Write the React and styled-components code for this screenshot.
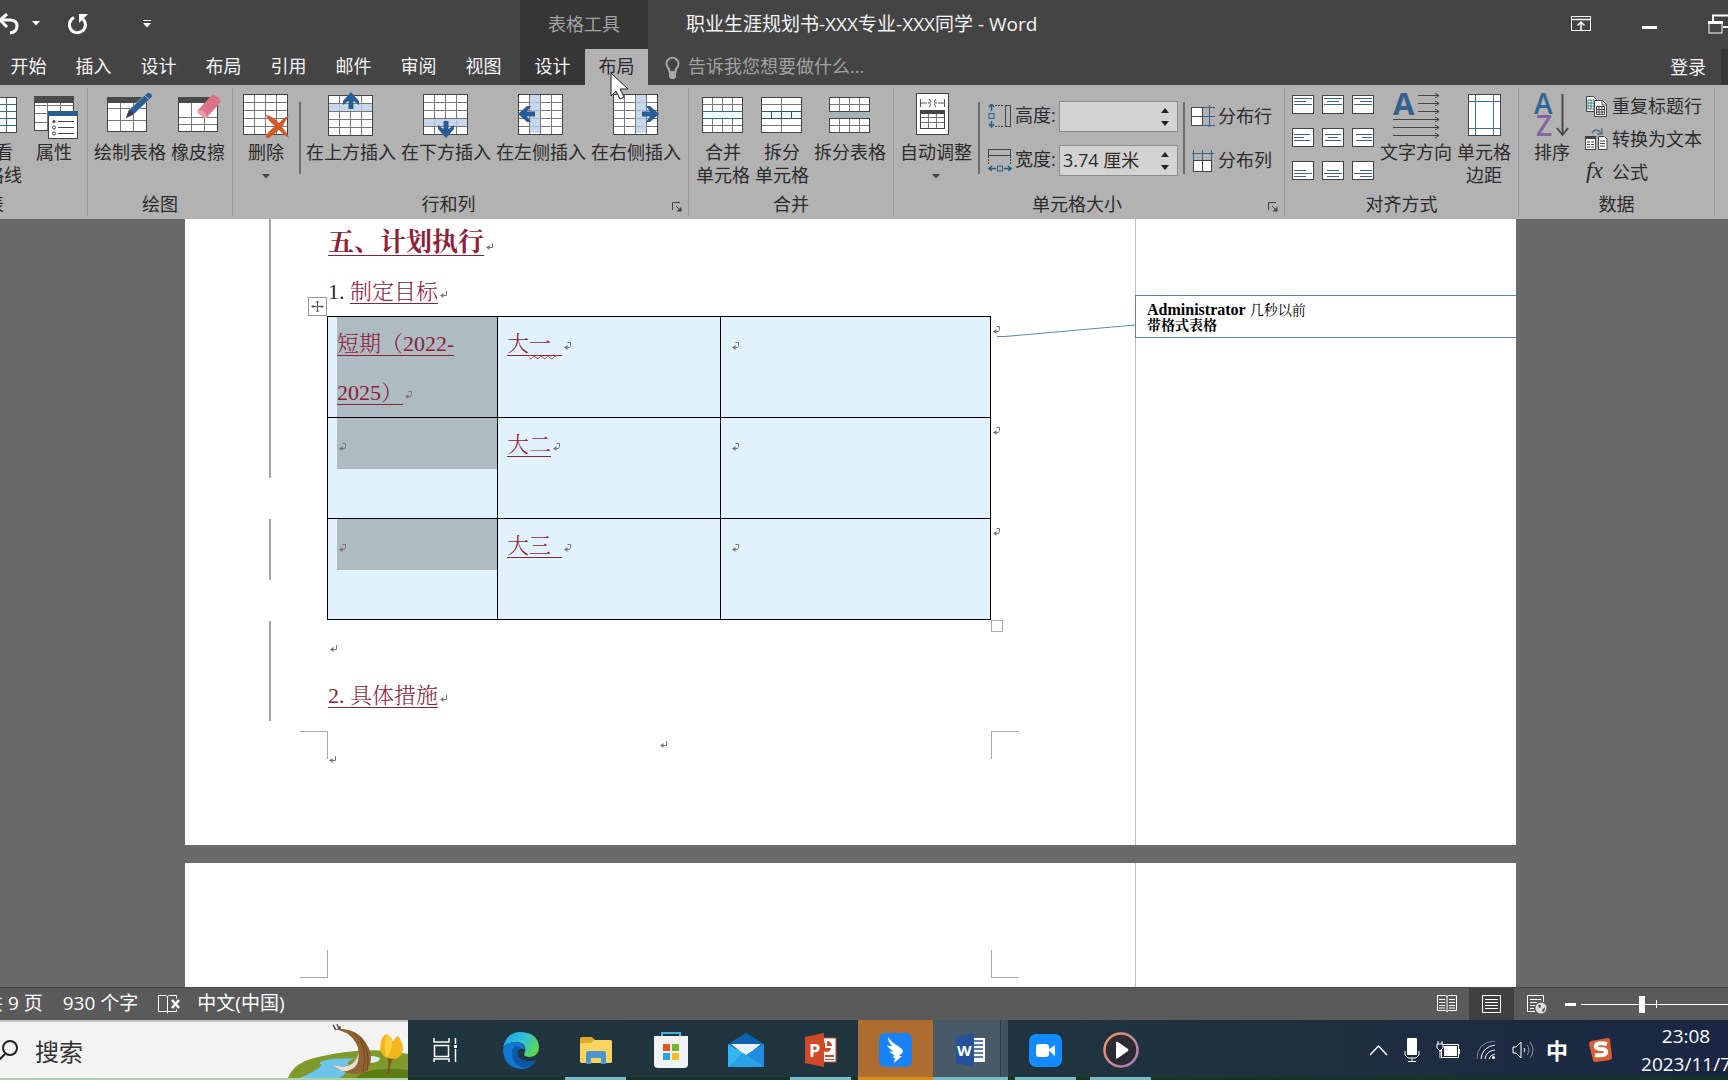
import React, { useState } from 'react';
import styled, { createGlobalStyle, css } from 'styled-components';

const UI_FONT = '"Open Sans", "Noto Sans CJK SC", sans-serif';
const DOC_FONT = '"Liberation Serif", "Noto Serif CJK SC", "Noto Sans CJK SC", serif';

/* ---------- ribbon drawings ---------- */

const steps = (from, size, n) => Array.from({ length: n - 1 }, (_, i) => Math.round(from + (size * (i + 1)) / n) + 0.5);

const Cells = ({ x, y, w, h, cols, rows, line = '#777', edge = '#444', fill = '#fff' }) => (
  <g shapeRendering="crispEdges">
    <rect x={x + 0.5} y={y + 0.5} width={w} height={h} fill={fill} />
    {steps(x, w, cols).map(v => <path key={'c' + v} d={`M${v} ${y}V${y + h}`} stroke={line} />)}
    {steps(y, h, rows).map(v => <path key={'r' + v} d={`M${x} ${v}H${x + w}`} stroke={line} />)}
    <rect x={x + 0.5} y={y + 0.5} width={w} height={h} fill="none" stroke={edge} />
  </g>
);

const Big = ({ children }) => (
  <svg width="48" height="48" viewBox="0 0 48 48" fill="none" aria-hidden="true">{children}</svg>
);

const GridlinesIcon = () => (
  <Big><Cells x={4} y={5} w={41} h={35} cols={4} rows={5} line="#2f6f78" /></Big>
);
const PropertiesIcon = () => (
  <Big>
    <Cells x={4} y={4} w={39} h={34} cols={3} rows={4} />
    <path d="M4 4h40v7H4z" fill="#4a4a4a" />
    <rect x="18.5" y="19.5" width="29" height="27" fill="#fff" stroke="#444" />
    <path d="M18 19h30v5H18z" fill="#2a5c8c" />
    <path d="M28 29.500h16M28 35.500h16M28 41.500h16" stroke="#444" />
    <circle cx="24" cy="29.500" r="1.500" fill="#444" />
    <circle cx="24" cy="35.500" r="1.500" stroke="#444" />
    <circle cx="24" cy="41.500" r="1.500" stroke="#444" />
  </Big>
);
const DrawIcon = () => (
  <Big>
    <Cells x={1} y={5} w={39} h={34} cols={3} rows={3} />
    <path d="M1 5h40v6H1z" fill="#4a4a4a" />
    <path d="M20 26l3-8L41 1q3-2 6 3L28 22z" fill="#2a5f96" stroke="#b2b2b2" strokeWidth=".8" />
    <path d="M20 26l3-8 5 4z" fill="#3b3b3b" />
    <path d="M38 3l6 5" stroke="#9dbbd8" />
  </Big>
);
const EraserIcon = () => (
  <Big>
    <Cells x={4} y={5} w={39} h={34} cols={3} rows={5} />
    <path d="M5 12h38v12H5z" fill="#fff" />
    <path d="M4 5h40v6H4z" fill="#4a4a4a" />
    <path d="M17.500 11v20M30.500 20v11" stroke="#777" />
    <path d="M24 18L37 4q2-2 5 0l4 3q1 2 0 4L33 25q-2 2-4 0l-5-4q-1-1 0-3z" fill="#dd7387" />
    <path d="M24 18l6 1 4 6q-3 2-5 0l-5-4z" fill="#ec9aaa" />
  </Big>
);
const DeleteIcon = () => (
  <Big>
    <Cells x={1} y={2} w={44} h={40} cols={4} rows={5} />
    <path d="M24 23q5 0 13 8Q42 25 47 24q-4 5-7 11 5 5 7 11-6-3-10-8-6 5-10 8-4 1-3-3 4-5 9-9-7-5-9-11z" fill="#d35a26" />
  </Big>
);
const Arrow = ({ at }) => (
  <path transform={at} d="M-8 1L0 -8L8 1V5L2.500 1V9H-2.500V1L-8 5z" fill="#265d96" />
);
const InsertIcon = ({ dir }) => {
  const band = { up: [2, 12, 43, 7], down: [2, 27, 43, 7], left: [13, 3, 10, 38], right: [24, 3, 10, 38] }[dir];
  const at = { up: 'translate(24 8)', down: 'translate(24 38) rotate(180)', left: 'translate(9 22) rotate(-90)', right: 'translate(39 22) rotate(90)' }[dir];
  return (
    <Big>
      <Cells x={1} y={dir === 'up' ? 3 : 2} w={44} h={40} cols={4} rows={5} />
      <rect x={band[0]} y={band[1]} width={band[2]} height={band[3]} fill="#b9cce6" opacity=".8" />
      <Arrow at={at} />
    </Big>
  );
};
const MergeIcon = () => (
  <Big>
    <Cells x={3} y={5} w={40} h={35} cols={4} rows={5} />
    <path d="M4 20h39v6H4z" fill="#eefcfc" />
    <path d="M3 19.500h41M3 26.500h41" stroke="#2f6f78" />
  </Big>
);
const SplitCellsIcon = () => (
  <Big>
    <Cells x={3} y={5} w={40} h={35} cols={2} rows={5} />
    <path d="M4 20h39v6H4z" fill="#eefcfc" />
    <path d="M3 19.500h41M3 26.500h41M13.500 20v6M23.500 20v6M33.500 20v6" stroke="#2b5560" />
  </Big>
);
const SplitTableIcon = () => (
  <Big>
    <path d="M3 20h41v6H3z" fill="#a5b2b7" />
    <Cells x={3} y={5} w={40} h={14} cols={4} rows={2} />
    <Cells x={3} y={26} w={40} h={14} cols={4} rows={2} />
  </Big>
);
const AutoFitIcon = () => (
  <Big>
    <rect x="4.500" y="1.500" width="32" height="41" fill="#fff" stroke="#444" />
    <path d="M8.500 7v8M32.500 7v8M9 11h6M26 11h6M17 7l2 3M24 7l-2 3M17 15l2-3M24 15l-2-3M16 11h3M22 11h3" stroke="#555" />
    <Cells x={8} y={19} w={24} h={17} cols={3} rows={3} />
    <path d="M8 18h25v4H8z" fill="#444" />
  </Big>
);
const TextDirIcon = () => (
  <Big>
    <text x="1" y="23" fontFamily="Open Sans" fontWeight="700" fontSize="31" fill="#33608f">A</text>
    <path d="M26 3.500h21M26 11.500h21M26 19.500h21M1 27.500h46M1 35.500h46M1 43.500h46" stroke="#444" />
    <path d="M43 1l4 2.500-4 2.500M43 9l4 2.500-4 2.500M43 17l4 2.500-4 2.500M43 25l4 2.500-4 2.500M43 33l4 2.500-4 2.500M43 41l4 2.500-4 2.500" stroke="#444" />
  </Big>
);
const MarginsIcon = () => (
  <Big>
    <rect x="8.500" y="2.500" width="32" height="41" fill="#fff" stroke="#444" />
    <path d="M15.500 3v40M33.500 3v40M9 9.500h31M9 36.500h31" stroke="#3f6f93" />
  </Big>
);
const SortIcon = () => (
  <Big>
    <text x="6" y="22" fontFamily="Open Sans" fontWeight="600" fontSize="28" fill="#2d6797">A</text>
    <text x="8" y="44" fontFamily="Open Sans" fontWeight="600" fontSize="28" fill="#8564a4">Z</text>
    <path d="M34.500 2v41M29 36l5.500 7 5.500-7" stroke="#4a4a4a" strokeWidth="2" />
  </Big>
);

const Small = ({ children }) => (
  <svg width="24" height="24" viewBox="0 0 24 24" fill="none" aria-hidden="true">{children}</svg>
);
const HeightIcon = () => (
  <Small>
    <path d="M3.500 0v7M1 3l2.500-3L6 3M3.500 17v6M1 20l2.500 3L6 20" stroke="#2f5d80" strokeWidth="1.500" />
    <rect x="1" y="9.500" width="5" height="5" stroke="#2f5d80" />
    <path d="M7 1.500h9M7 22.500h9" stroke="#444" strokeDasharray="2 1" />
    <rect x="17.500" y="1.500" width="5" height="21" stroke="#444" />
  </Small>
);
const WidthIcon = () => (
  <Small>
    <rect x=".5" y="1.500" width="22" height="6" stroke="#444" />
    <path d="M.5 8v9M22.500 8v9" stroke="#444" strokeDasharray="2 1" />
    <path d="M1 20.500h7M4 18l-3 2.500 3 2.500M16 20.500h7M20 18l3 2.500-3 2.500" stroke="#2f5d80" strokeWidth="1.500" />
    <rect x="9.500" y="18" width="5" height="5" stroke="#2f5d80" />
  </Small>
);
const RowsIcon = () => (
  <Small>
    <rect x=".5" y="3.500" width="11" height="18" fill="#fff" stroke="#444" />
    <path d="M0 12.500h12" stroke="#444" />
    <path d="M12 3.500h12M12 12.500h12M12 21.500h12M18.500 1v22" stroke="#3b6285" />
  </Small>
);
const ColsIcon = () => (
  <Small>
    <path d="M1 5.500h22M2.500 2v10M11.500 2v10M20.500 2v10" stroke="#3b6285" />
    <rect x="2.500" y="12.500" width="18" height="11" fill="#fff" stroke="#444" />
    <path d="M11.500 12v12" stroke="#444" />
  </Small>
);
const AlignIcon = ({ h, v }) => {
  const y = { t: 3.5, m: 6.5, b: 9.5 }[v];
  const widths = v === 'm' ? [16, 10, 16] : v === 't' ? [18, 12, 18] : [12, 18, 12];
  return (
    <svg width="22" height="19" viewBox="0 0 22 19" aria-hidden="true">
      <rect x=".5" y=".5" width="21" height="18" fill="#fff" stroke="#444" />
      {widths.map((w, i) => {
        const x = h === 'l' ? 2 : h === 'c' ? 11 - w / 2 : 20 - w;
        return <path key={i} d={`M${x} ${y + i * 3}h${w}`} stroke="#3b6285" />;
      })}
    </svg>
  );
};
const RepeatIcon = () => (
  <Small>
    <path d="M1.500 2.500h7l3 3v12h-10z" fill="#fff" stroke="#444" />
    <path d="M3 6h6v9H3zM3 9h6M3 12h6M6 6v9" stroke="#3f7f86" />
    <path d="M9.500 6.500h8l4 4v12h-12z" fill="#fff" stroke="#444" />
    <path d="M17 7v4h4M11.500 12.500h8v8h-8zM11 15.500h8M11 18h8M14 12v8M17 12v8" stroke="#444" />
  </Small>
);
const ConvertIcon = () => (
  <Small>
    <rect x=".5" y="9.500" width="10" height="13" fill="#fff" stroke="#444" />
    <path d="M0 9h11v3H0z" fill="#444" />
    <path d="M2 15h3M6 15h3M2 17.500h3M6 17.500h3M2 20h3M6 20h3" stroke="#444" />
    <path d="M13.500 9.500h6l2.500 2.500v10.500h-8.500z" fill="#fff" stroke="#444" />
    <path d="M15 14h5M15 16.500h5M15 19h5" stroke="#444" />
    <path d="M7 6q4-6 9 0M17 1v6h-5" stroke="#5a6f80" strokeWidth="1.500" />
  </Small>
);
const FxIcon = () => (
  <Small>
    <text x="1" y="18" fontFamily="Liberation Serif" fontStyle="italic" fontSize="23" fill="#2b2b2b">fx</text>
  </Small>
);
const Launcher = () => (
  <svg width="10" height="10" viewBox="0 0 10 10" fill="none" aria-hidden="true">
    <path d="M.5 8V.5H8M4 4l4 4" stroke="#444" />
    <path d="M9.500 4.500v5h-5z" fill="#444" />
  </svg>
);

/* ---------- document marks ---------- */

const Mark = ({ cell }) => (
  <svg width="8" height="9" viewBox="0 0 8 9" fill="none" aria-hidden="true">
    {cell
      ? <path d="M3.500 .5h3v3l-1 2h-3" stroke="#777" />
      : <path d="M6.500 1v4.500h-4" stroke="#777" />}
    <path d="M0 5.500L3.500 3v5z" fill="#777" />
  </svg>
);

/* ---------- page ---------- */

const App = () => {
  const [height, setHeight] = useState('');
  const [width, setWidth] = useState('3.74 厘米');
  const [zoom, setZoom] = useState(40);

  return (
    <Window>
      <Global />
      <TopBar>
        <TopLeft>
          <QuickAccess>
            <QuickButton aria-label="撤消">
              <svg width="20" height="22" viewBox="0 0 20 22" fill="none">
                <path d="M1 7h9q7 0 7 6t-7 7" stroke="#fff" strokeWidth="3" />
                <path d="M7 1L0 7l7 7" stroke="#fff" strokeWidth="3" />
              </svg>
            </QuickButton>
            <QuickButton aria-label="撤消列表" $gap={12}>
              <svg width="8" height="5"><path d="M0 0h8L4 4.500z" fill="#fff" /></svg>
            </QuickButton>
            <QuickButton aria-label="重复" $gap={28}>
              <svg width="20" height="22" viewBox="0 0 20 22" fill="none">
                <path d="M6 4.500a8 8 0 1 0 9 1.500" stroke="#fff" strokeWidth="3" />
                <path d="M11 1h9L11 10z" fill="#fff" />
              </svg>
            </QuickButton>
            <QuickButton aria-label="自定义快速访问工具栏" $gap={55}>
              <svg width="8" height="8"><path d="M0 0h8v1H0zM0 3h8L4 7.500z" fill="#fff" /></svg>
            </QuickButton>
          </QuickAccess>
          <Tabs>
            {['开始', '插入', '设计', '布局', '引用', '邮件', '审阅', '视图'].map(t => <Tab key={t}>{t}</Tab>)}
          </Tabs>
        </TopLeft>
        <Context>
          <ContextTitle>表格工具</ContextTitle>
          <ContextTabs>
            <Tab>设计</Tab>
            <Tab $active>布局</Tab>
          </ContextTabs>
          <Pointer width="20" height="28" viewBox="0 0 20 28" aria-hidden="true">
            <path d="M1 1v23l5-5 4 8 4-2-4-8h8z" fill="#fff" stroke="#222" />
          </Pointer>
        </Context>
        <TopRight>
          <TitleRow>
            <Title>职业生涯规划书-XXX专业-XXX同学 - Word</Title>
            <WindowButtons>
              <PlainButton aria-label="功能区显示选项">
                <svg width="20" height="16" viewBox="0 0 20 16" fill="none">
                  <rect x=".5" y=".5" width="19" height="14" stroke="#fff" />
                  <path d="M0 3.500h20M10 6v8M6.500 9.500L10 6l3.500 3.500" stroke="#fff" strokeWidth="1.500" />
                </svg>
              </PlainButton>
              <PlainButton aria-label="最小化">
                <svg width="15" height="16"><path d="M0 10h15v3H0z" fill="#fff" /></svg>
              </PlainButton>
              <PlainButton aria-label="向下还原">
                <svg width="20" height="20" viewBox="0 0 20 20" fill="none">
                  <path d="M5 7V1.500h15M15 13h5" stroke="#fff" strokeWidth="2" />
                  <rect x="1" y="8" width="13" height="11" stroke="#fff" />
                  <path d="M0 7h15v3H0z" fill="#fff" />
                </svg>
              </PlainButton>
            </WindowButtons>
          </TitleRow>
          <TellRow>
            <TellLabel>
              <svg width="15" height="23" viewBox="0 0 15 23" fill="none" aria-hidden="true">
                <path d="M4.500 16q0-3-2-5a6 6 0 1 1 10 0q-2 2-2 5z" stroke="#a9a9a9" strokeWidth="2" />
                <path d="M4 17h7v4l-2 2H6l-2-2z" fill="#a9a9a9" />
              </svg>
              <TellInput placeholder="告诉我您想要做什么..." aria-label="操作说明搜索" />
            </TellLabel>
            <SignIn>登录</SignIn>
            <Share />
          </TellRow>
        </TopRight>
      </TopBar>

      <Ribbon>
        <Group $bleed>
          <GroupBody $pad="0 9px 0 0" $end>
            <BigButton><GridlinesIcon />查看<br />网格线</BigButton>
            <BigButton $indent={3}><PropertiesIcon />属性</BigButton>
          </GroupBody>
          <GroupLabel>表</GroupLabel>
        </Group>
        <Group>
          <GroupBody $pad="0 7px 0 6px">
            <BigButton><DrawIcon />绘制表格</BigButton>
            <BigButton><EraserIcon />橡皮擦</BigButton>
          </GroupBody>
          <GroupLabel>绘图</GroupLabel>
        </Group>
        <Group>
          <GroupBody $pad="0 7px 0 9px">
            <BigButton><DeleteIcon />删除<Caret /></BigButton>
            <Rule $left={4} />
            <BigButton><InsertIcon dir="up" />在上方插入</BigButton>
            <BigButton><InsertIcon dir="down" />在下方插入</BigButton>
            <BigButton><InsertIcon dir="left" />在左侧插入</BigButton>
            <BigButton><InsertIcon dir="right" />在右侧插入</BigButton>
          </GroupBody>
          <GroupLabel $launch>行和列<LaunchButton aria-label="表格属性"><Launcher /></LaunchButton></GroupLabel>
        </Group>
        <Group>
          <GroupBody $pad="0 7px 0 7px">
            <BigButton><MergeIcon />合并<br />单元格</BigButton>
            <BigButton><SplitCellsIcon />拆分<br />单元格</BigButton>
            <BigButton><SplitTableIcon />拆分表格</BigButton>
          </GroupBody>
          <GroupLabel>合并</GroupLabel>
        </Group>
        <Group>
          <GroupBody $pad="0 12px 0 6px">
            <BigButton><AutoFitIcon />自动调整<Caret /></BigButton>
            <Rule $left={1} />
            <SizeGrid>
              <SizeLabel htmlFor="cell-height"><HeightIcon />高度:</SizeLabel>
              <Spin>
                <SpinInput id="cell-height" value={height} onChange={e => setHeight(e.target.value)} />
                <Spinner />
              </Spin>
              <SizeLabel htmlFor="cell-width"><WidthIcon />宽度:</SizeLabel>
              <Spin>
                <SpinInput id="cell-width" value={width} onChange={e => setWidth(e.target.value)} />
                <Spinner />
              </Spin>
            </SizeGrid>
            <Rule />
            <Spread>
              <SmallButton><RowsIcon />分布行</SmallButton>
              <SmallButton><ColsIcon />分布列</SmallButton>
            </Spread>
          </GroupBody>
          <GroupLabel $launch>单元格大小<LaunchButton aria-label="单元格大小选项"><Launcher /></LaunchButton></GroupLabel>
        </Group>
        <Group>
          <GroupBody $pad="0 7px 0 7px">
            <AlignGrid>
              {['t', 'm', 'b'].map(v => ['l', 'c', 'r'].map(h => (
                <PlainButton key={v + h} aria-label={'对齐 ' + v + h}><AlignIcon h={h} v={v} /></PlainButton>
              )))}
            </AlignGrid>
            <BigButton><TextDirIcon />文字方向</BigButton>
            <BigButton><MarginsIcon />单元格<br />边距</BigButton>
          </GroupBody>
          <GroupLabel>对齐方式</GroupLabel>
        </Group>
        <Group>
          <GroupBody $pad="0 12px 0 9px">
            <BigButton><SortIcon />排序</BigButton>
            <DataList>
              <SmallButton><RepeatIcon />重复标题行</SmallButton>
              <SmallButton><ConvertIcon />转换为文本</SmallButton>
              <SmallButton><FxIcon />公式</SmallButton>
            </DataList>
          </GroupBody>
          <GroupLabel>数据</GroupLabel>
        </Group>
      </Ribbon>

      <Workspace>
        <Page>
          <PageMain>
            <PageRow>
              <Gutter>
                <ChangeBar $h={259} />
                <ChangeBar $h={61} />
                <ChangeBar $h={100} />
              </Gutter>
              <Text>
                <Heading><Ins>五、计划执行</Ins><Mark /></Heading>
                <Para $first>1. <Ins>制定目标</Ins><Mark /></Para>
                <TableWrap>
                  <MoveHandle>
                    <svg width="13" height="13" viewBox="0 0 13 13" fill="none" aria-hidden="true">
                      <path d="M6.500 1v11M1 6.500h11M5 2.500L6.500 1 8 2.500M5 10.500L6.500 12 8 10.500M2.500 5L1 6.500 2.500 8M10.500 5L12 6.500 10.500 8" stroke="#555" />
                    </svg>
                  </MoveHandle>
                  <DocTable>
                    <colgroup>
                      <Col $w="25.650%" /><Col $w="33.600%" /><Col />
                    </colgroup>
                    <tbody>
                      <tr>
                        <Cell><Selected><Ins>短期（2022-</Ins><br /><Ins>2025）</Ins><Mark cell /></Selected></Cell>
                        <Cell><Line><Ins>大<Wavy>一&nbsp;</Wavy>&nbsp;</Ins><Mark cell /></Line></Cell>
                        <Cell><Line><Mark cell /></Line></Cell>
                      </tr>
                      <tr>
                        <Cell><Selected><Mark cell /></Selected></Cell>
                        <Cell><Line><Ins>大二</Ins><Mark cell /></Line></Cell>
                        <Cell><Line><Mark cell /></Line></Cell>
                      </tr>
                      <tr>
                        <Cell><Selected><Mark cell /></Selected></Cell>
                        <Cell><Line><Ins>大三&nbsp;&nbsp;</Ins><Mark cell /></Line></Cell>
                        <Cell><Line><Mark cell /></Line></Cell>
                      </tr>
                    </tbody>
                  </DocTable>
                  <ResizeHandle />
                </TableWrap>
                <Para><Mark /></Para>
                <Para><Ins>2. 具体措施</Ins><Mark /></Para>
              </Text>
              <RightMargin>
                <Mark cell /><Mark cell /><Mark cell />
                <Connector viewBox="0 0 138 14" preserveAspectRatio="none" aria-hidden="true">
                  <path d="M0 12.500h8L138 1" stroke="#5a8ba8" fill="none" />
                </Connector>
              </RightMargin>
            </PageRow>
            <Corners>
              <Corner $left />
              <FooterMarks><Mark /><Mark /><span /></FooterMarks>
              <Corner />
            </Corners>
          </PageMain>
          <Markup>
            <Balloon>
              <strong>Administrator</strong> <BalloonTime>几秒以前</BalloonTime><br />
              <BalloonNote>带格式表格</BalloonNote>
            </Balloon>
          </Markup>
        </Page>
        <Page $next>
          <PageMain>
            <Corners $top>
              <Corner $left $bottom />
              <FooterMarks />
              <Corner $bottom />
            </Corners>
          </PageMain>
          <Markup />
        </Page>
      </Workspace>

      <StatusBar>
        <StatusText>共 9 页</StatusText>
        <StatusText>930 个字</StatusText>
        <StatusButton aria-label="校对">
          <svg width="22" height="20" viewBox="0 0 22 20" fill="none">
            <path d="M14 17.500H10q-1-1-2 0H.5v-16h7q1 0 2 1v15M9.500 2.500q1-1 2-1h7v3" stroke="#fff" />
            <path d="M14 6l7 8M21 6l-7 8" stroke="#fff" strokeWidth="2.500" />
            <path d="M9.500 17v2.500M18.500 15.500v2h-6" stroke="#fff" />
          </svg>
        </StatusButton>
        <StatusText>中文(中国)</StatusText>
        <Spacer />
        <ViewButton aria-label="阅读视图">
          <svg width="20" height="20" viewBox="0 0 20 20" fill="none">
            <path d="M.5 1.500h8l1.500 1 1.500-1h8v15h-8L10 18l-1.500-1.500h-8zM10 2v16M2 5.500h6M2 8.500h6M2 11.500h6M2 14h6M12 5.500h6M12 8.500h6M12 11.500h6M12 14h6" stroke="#fff" />
          </svg>
        </ViewButton>
        <ViewButton $active aria-label="页面视图">
          <svg width="20" height="20" viewBox="0 0 20 20" fill="none">
            <path d="M.5 1.500h18v17H.5zM3 5.500h13M3 8.500h13M3 11.500h13M3 14.500h13" stroke="#fff" />
          </svg>
        </ViewButton>
        <ViewButton aria-label="Web 版式视图">
          <svg width="20" height="20" viewBox="0 0 20 20" fill="none">
            <path d="M8 17.500H.5v-16h16V8M3 5.500h11M3 8.500h7M3 11.500h5M3 14.500h4" stroke="#fff" />
            <circle cx="14" cy="14" r="5.500" fill="#ddd" />
            <path d="M11 11q3-1 3 1t-2 2zM15 16l3-3q0 4-2 5z" fill="#555" />
          </svg>
        </ViewButton>
        <ZoomOut aria-label="缩小"><svg width="11" height="3"><path d="M0 0h11v3H0z" fill="#fff" /></svg></ZoomOut>
        <Zoom type="range" aria-label="显示比例" value={zoom} onChange={e => setZoom(e.target.value)} />
      </StatusBar>

      <Taskbar>
        <Search>
          <svg width="19" height="21" viewBox="0 0 19 21" fill="none" aria-hidden="true">
            <circle cx="10" cy="8" r="7" stroke="#222" strokeWidth="2" /><path d="M5 14l-6 6" stroke="#222" strokeWidth="2" />
          </svg>
          <SearchInput placeholder="搜索" aria-label="搜索" />
          <SearchArt />
        </Search>
        <AppButton aria-label="任务视图">
          <svg width="25" height="26" viewBox="0 0 25 26" fill="none">
            <path d="M1 1v4h15V1M1 25v-3h15v3M1.500 8.500h14v11h-14zM22.500 1v6M22.500 12v13" stroke="#fff" strokeWidth="1.500" />
            <path d="M21 8h3v3h-3z" fill="#fff" />
          </svg>
        </AppButton>
        <AppButton aria-label="Microsoft Edge"><EdgeLogo /></AppButton>
        <AppButton $open aria-label="文件资源管理器">
          <svg width="34" height="30" viewBox="0 0 34 30">
            <path d="M1 4q0-2 2-2h10l3 3h15q2 0 2 2v20H1z" fill="#e0a82a" />
            <path d="M1 8h11l3-3h16q2 0 2 2v20q0 1-2 1H3q-2 0-2-2z" fill="#fbd45f" />
            <path d="M7 29V18q0-2 3-2h14q3 0 3 2v11h-5v-6H12v6z" fill="#4a97cf" />
          </svg>
        </AppButton>
        <AppButton aria-label="Microsoft Store">
          <svg width="36" height="38" viewBox="0 0 36 38">
            <path d="M9 8V2h18v6" fill="none" stroke="#48aee6" strokeWidth="2" />
            <path d="M1 5h34v28q0 4-4 4H5q-4 0-4-4z" fill="#f1f2f4" />
            <path d="M10 13h7v7h-7z" fill="#e8542a" /><path d="M19 13h7v7h-7z" fill="#79b52a" />
            <path d="M10 22h7v7h-7z" fill="#2ba3dc" /><path d="M19 22h7v7h-7z" fill="#f6b928" />
          </svg>
        </AppButton>
        <AppButton aria-label="邮件">
          <svg width="36" height="36" viewBox="0 0 36 36">
            <path d="M0 12L18 1l18 11-18 12z" fill="#0d62ae" />
            <path d="M3 12h30L18 24z" fill="#e9f3fa" />
            <path d="M0 12l18 11 18-11v23H0z" fill="#38b4f2" />
            <path d="M0 35h36L18 23l-3-2z" fill="#2aa2e8" />
            <path d="M18 23l18-11v23z" fill="#1e8ddc" />
          </svg>
        </AppButton>
        <AppButton $open aria-label="PowerPoint">
          <svg width="34" height="34" viewBox="0 0 34 34">
            <path d="M18 5h14v24H18z" fill="#fff" stroke="#d24726" />
            <path d="M21 9a5 5 0 1 0 6 6h-6zM23 8v5h5a5 5 0 0 0-5-5zM21 22h9v2h-9zM21 26h9v1h-9z" fill="#d24726" />
            <path d="M1 4l19-4v34L1 30z" fill="#d24726" />
            <text x="5" y="24" fontFamily="Open Sans" fontWeight="700" fontSize="18" fill="#fff">P</text>
          </svg>
        </AppButton>
        <AppButton $alert aria-label="钉钉">
          <svg width="33" height="34" viewBox="0 0 33 34">
            <rect width="33" height="34" rx="6" fill="#1b83f7" />
            <path d="M9 4q3 5 10 9 5 3 5 6l-4 4h3l-8 7 1-5h-2l1-3q-4-2-5-4 2 1 4 0-5-3-6-6 3 2 5 1-4-4-4-9z" fill="#fff" />
          </svg>
        </AppButton>
        <AppButton $current aria-label="Word">
          <svg width="34" height="34" viewBox="0 0 34 34">
            <path d="M16 5h15v24H16z" fill="#fff" />
            <path d="M20 8h9M20 12h9M20 16h9M20 20h9M20 24h9" stroke="#26529c" strokeWidth="1.500" />
            <path d="M2 4l18-4v34L2 30z" fill="#26529c" />
            <text x="3" y="23" fontFamily="Open Sans" fontWeight="700" fontSize="15" fill="#fff">W</text>
          </svg>
        </AppButton>
        <AppButton $open aria-label="会议">
          <svg width="33" height="33" viewBox="0 0 33 33">
            <rect width="33" height="33" rx="7" fill="#138bff" />
            <rect x="7" y="10" width="13" height="13" rx="3" fill="#fff" />
            <path d="M19 16l7-5v11z" fill="#fff" />
          </svg>
        </AppButton>
        <AppButton $open aria-label="媒体播放器">
          <svg width="36" height="36" viewBox="0 0 36 36">
            <defs>
              <linearGradient id="ring" x2="1" y2="1"><stop stopColor="#ef9a62" /><stop offset="1" stopColor="#a07cc4" /></linearGradient>
            </defs>
            <circle cx="18" cy="18" r="16.500" fill="#2d2a33" stroke="url(#ring)" strokeWidth="2.500" />
            <path d="M13 10q0-1 2 0l10 7q1 1 0 2l-10 7q-2 1-2 0z" fill="#fff" />
          </svg>
        </AppButton>
        <Spacer />
        <Tray>
          <svg width="19" height="12" viewBox="0 0 19 12" fill="none"><path d="M1 11l8.500-9L18 11" stroke="#fff" strokeWidth="1.500" /></svg>
          <svg width="16" height="26" viewBox="0 0 16 26" fill="none">
            <rect x="3" y="1" width="10" height="17" rx="1" fill="#fff" /><path d="M1 14v4l3 3h8l3-3v-4M8 21v4M4 24.500h8" stroke="#fff" />
          </svg>
          <svg width="24" height="20" viewBox="0 0 24 20" fill="none">
            <path d="M5.500 4.500h17v13h-17z" stroke="#fff" /><path d="M8 6h13v10H8z" fill="#fff" />
            <path d="M1 4h6v4L4 11 1 8zM2 1v3M6 1v3M4 11v7" fill="#1b2b43" stroke="#fff" />
            <path d="M23 9v5" stroke="#fff" strokeWidth="2" />
          </svg>
          <svg width="20" height="20" viewBox="0 0 20 20" fill="none">
            <path d="M1 19Q1 2 19 1" stroke="#7c8694" /><path d="M5 19Q6 7 19 5M9 19q1-8 10-9M13 19q1-4 6-5" stroke="#fff" />
            <circle cx="17.500" cy="17.500" r="1.500" fill="#fff" />
          </svg>
          <svg width="23" height="20" viewBox="0 0 23 20" fill="none">
            <path d="M1 7h3l5-5v16l-5-5H1zM12 8q2 2 0 4" stroke="#fff" /><path d="M15 5q4 5 0 10M18 2q6 8 0 16" stroke="#8a94a4" />
          </svg>
          <Ime>中</Ime>
          <svg width="24" height="26" viewBox="0 0 24 26">
            <path d="M2 4l17-3q2 0 2 2l2 17q0 2-2 3L7 25q-3 0-3-2L0 7q0-2 2-3z" fill="#d8602f" />
            <path d="M18 7q-9-2-11 1-1 4 5 4t5 4q-1 3-11 2" fill="none" stroke="#fff" strokeWidth="4" />
          </svg>
        </Tray>
        <Clock>
          <div>23:08</div>
          <div>2023/11/7</div>
        </Clock>
      </Taskbar>
    </Window>
  );
};

export default App;

const Spinner = () => (
  <SpinButtons>
    <PlainButton aria-label="增加"><svg width="8" height="5"><path d="M0 5L4 0l4 5z" fill="#222" /></svg></PlainButton>
    <PlainButton aria-label="减少"><svg width="8" height="5"><path d="M0 0l4 5 4-5z" fill="#222" /></svg></PlainButton>
  </SpinButtons>
);

const Caret = () => (
  <CaretBox><svg width="8" height="5"><path d="M0 0h8L4 4.500z" fill="#444" /></svg></CaretBox>
);

const EdgeLogo = () => (
  <svg width="36" height="37" viewBox="0 0 36 37">
    <defs>
      <linearGradient id="edgeTop" x2="1" y2=".4"><stop stopColor="#1b9fe0" /><stop offset=".6" stopColor="#2fc3d8" /><stop offset="1" stopColor="#5cd65a" /></linearGradient>
    </defs>
    <path d="M0 16Q3 0 18 0q17 1 18 15 0 9-9 10-8 0-5-5Q24 11 14 10 5 9 0 16z" fill="url(#edgeTop)" />
    <path d="M0 17Q4 9 13 10q8 1 9 7-7-2-8 4 0 8 10 10 5 0 9-3-5 9-15 9Q0 35 0 17z" fill="#1477d4" />
    <path d="M12 14q-5 5-2 13 3 7 11 9 8-1 12-8-5 2-9 1-11-2-9-10 1-2 3-3-2-2-6-2z" fill="#0c58a8" />
  </svg>
);

const SearchArt = () => (
  <svg width="120" height="56" viewBox="0 0 120 56" aria-hidden="true">
    <path d="M0 56Q6 40 30 35q50-12 90-3v24z" fill="#7f9a2a" />
    <path d="M68 56q10-12 52-8v8z" fill="#5d7d14" />
    <path d="M12 56q16-7 22-13-8-3 10-6l24-1q-10 3-8 6 4 4-8 14z" fill="#6fc4ea" />
    <path d="M74 36q10-4 18 0 0 5-12 5z" fill="#dceef2" />
    <path d="M46 7q22-2 32 14 7 10 4 22-3 9-14 9-12 0-24-9 14 4 22-3 8-8 2-19-7-12-22-14z" fill="#8f6334" />
    <path d="M44 43q16 4 22-3 5-5 4-12 2 12-3 17-6 5-13 4z" fill="#e7dfd0" />
    <path d="M72 15q11 12 7 34M66 11q15 12 9 39" stroke="#6f4821" fill="none" />
    <path d="M45 3l3 5M49 2l2 5M52 4v3" stroke="#555" strokeWidth="1.500" />
    <path d="M98 52q4-8 1-18l2-1q1 6 4 4-4 6-3 15z" fill="#7a5a2c" />
    <path d="M92 26q1-13 7-14 5 3 6 8 3-6 5-6 5 6 5 14-2 8-8 9l-7-1q-7-2-8-10z" fill="#f3b51c" />
    <path d="M99 12q5 4 5 10-1 9-5 14-5-12 0-24z" fill="#ffce3a" />
  </svg>
);

const Global = createGlobalStyle`
  * { box-sizing: border-box; }
  body { margin: 0; overflow: hidden; background: #6a6a6a; }
  button, input { font: inherit; color: inherit; }
  svg { display: block; flex: none; }
`;

const Window = styled.div`
  display: flex;
  flex-direction: column;
  height: 100vh;
  overflow: hidden;
  font-family: ${UI_FONT};
  font-size: 18px;
  line-height: 23px;
  color: #2b2b2b;
`;

const PlainButton = styled.button`
  display: flex;
  padding: 0;
  border: 0;
  background: none;
`;

const TopBar = styled.header`
  display: flex;
  flex: none;
  background: #444;
  color: #f4f4f4;
`;

const TopLeft = styled.div`
  width: 520px;
`;

const QuickAccess = styled.div`
  display: flex;
  align-items: center;
  height: 49px;
  padding-bottom: 2px;
`;

const QuickButton = styled(PlainButton)`
  margin-left: ${p => p.$gap || 0}px;
`;

const Tabs = styled.nav`
  display: flex;
  margin-left: -4px;
`;

const Tab = styled.button`
  width: ${p => (p.$active ? 63 : 65)}px;
  height: 36px;
  padding: 0 0 2px;
  border: 0;
  background: ${p => (p.$active ? '#b2b2b2' : 'transparent')};
  color: ${p => (p.$active ? '#2b2b2b' : '#f4f4f4')};
`;

const Context = styled.div`
  position: relative;
  width: 128px;
  background: #363636;
`;

const ContextTitle = styled.div`
  height: 49px;
  line-height: 49px;
  text-align: center;
  color: #a2a2a2;
`;

const ContextTabs = styled.nav`
  display: flex;
`;

const Pointer = styled.svg`
  position: absolute;
  left: 90px;
  top: 72px;
  z-index: 2;
`;

const TopRight = styled.div`
  flex: 1;
  min-width: 0;
`;

const TitleRow = styled.div`
  display: flex;
  align-items: center;
  justify-content: space-between;
  height: 49px;
  padding-left: 38px;
`;

const Title = styled.div`
  font-size: 19px;
  white-space: nowrap;
`;

const WindowButtons = styled.div`
  display: flex;
  align-items: center;
  gap: 51px;
  padding-bottom: 2px;
`;

const TellRow = styled.div`
  display: flex;
  align-items: center;
  height: 36px;
  padding-left: 17px;
`;

const TellLabel = styled.label`
  display: flex;
  align-items: center;
  gap: 8px;
  flex: 1;
`;

const TellInput = styled.input`
  width: 240px;
  padding: 0 0 2px;
  border: 0;
  outline: 0;
  background: none;
  &::placeholder {
    color: #a2a2a2;
    opacity: 1;
  }
`;

const SignIn = styled(PlainButton)`
  margin-right: 15px;
`;

const Share = styled.div`
  width: 7px;
  height: 36px;
  background: #363636;
`;

const Ribbon = styled.section`
  display: flex;
  flex: none;
  height: 134px;
  padding-top: 3px;
  background: #b2b2b2;
`;

const Group = styled.div`
  display: flex;
  flex-direction: column;
  flex: none;
  height: 128px;
  border-right: 1px solid #999;
  ${p => p.$bleed && css`
    width: 185px;
    margin-left: -97px;
  `}
`;

const GroupBody = styled.div`
  display: flex;
  align-items: flex-start;
  justify-content: ${p => (p.$end ? 'flex-end' : 'flex-start')};
  gap: 5px;
  height: 105px;
  padding: ${p => p.$pad};
  padding-top: 4px;
`;

const BigButton = styled.button`
  display: block;
  margin-left: ${p => p.$indent || 0}px;
  padding: 0;
  border: 0;
  background: none;
  text-align: center;
  white-space: nowrap;
  svg { margin: 0 auto 1px; }
`;

const CaretBox = styled.span`
  display: flex;
  align-items: center;
  height: 25px;
`;

const Rule = styled.div`
  width: 2px;
  height: 72px;
  margin: 10px 0 0 ${p => p.$left || 0}px;
  background: #6c6c6c;
`;

const GroupLabel = styled.div`
  position: relative;
  height: 23px;
  padding-right: ${p => (p.$launch ? 24 : 0)}px;
  text-align: center;
`;

const LaunchButton = styled(PlainButton)`
  position: absolute;
  right: 6px;
  bottom: 4px;
`;

const SizeGrid = styled.div`
  display: grid;
  grid-template-columns: 66px 119px;
  row-gap: 13px;
  column-gap: 5px;
  padding: 9px 0 0 3px;
`;

const SizeLabel = styled.label`
  display: flex;
  align-items: center;
  gap: 3px;
  height: 29px;
  white-space: nowrap;
`;

const Spin = styled.div`
  display: flex;
  height: 31px;
  border: 1px solid #8d8d8d;
  background: #d3d3d3;
`;

const SpinInput = styled.input`
  flex: 1;
  min-width: 0;
  padding: 0 3px;
  border: 0;
  outline: 0;
  background: none;
`;

const SpinButtons = styled.div`
  display: flex;
  flex-direction: column;
  justify-content: center;
  gap: 8px;
  padding-right: 8px;
`;

const SmallButton = styled.button`
  display: flex;
  align-items: center;
  gap: 3px;
  height: 24px;
  padding: 0;
  border: 0;
  background: none;
  white-space: nowrap;
`;

const Spread = styled.div`
  display: flex;
  flex-direction: column;
  gap: 20px;
  padding: 12px 0 0 1px;
`;

const AlignGrid = styled.div`
  display: grid;
  grid-template-columns: repeat(3, 22px);
  gap: 14px 8px;
  padding: 3px 1px 0 0;
`;

const DataList = styled.div`
  display: flex;
  flex-direction: column;
  gap: 9px;
  padding: 2px 0 0 4px;
`;

const Workspace = styled.main`
  display: flex;
  flex-direction: column;
  align-items: center;
  flex: 1;
  min-height: 0;
  padding-right: 27px;
  overflow: hidden;
  background: #6a6a6a;
`;

const Page = styled.article`
  display: flex;
  flex: none;
  width: 100%;
  max-width: 1331px;
  background: #fff;
  ${p => p.$next && css`
    margin-top: 18px;
    min-height: 400px;
  `}
`;

const PageMain = styled.div`
  flex: 1;
`;

const PageRow = styled.div`
  display: grid;
  grid-template-columns: 142px 1fr 144px;
`;

const Gutter = styled.div`
  display: flex;
  flex-direction: column;
  align-items: flex-start;
  gap: 41px;
  padding-left: 84px;
`;

const ChangeBar = styled.div`
  width: 2px;
  height: ${p => p.$h}px;
  background: #a3a3a3;
`;

const Text = styled.div`
  font-family: ${DOC_FONT};
  font-size: 22px;
  font-weight: 300;
  line-height: 50px;
  svg {
    display: inline-block;
    margin-left: 2px;
  }
`;

const Heading = styled.h2`
  margin: 0;
  padding-left: 1px;
  font-size: 26px;
  font-weight: 700;
  line-height: 48px;
`;

const Para = styled.p`
  margin: 0;
  padding-left: 1px;
  ${p => p.$first && css`
    padding-top: 1px;
    line-height: 48px;
  `}
`;

const Ins = styled.ins`
  color: #8e2038;
  text-decoration: underline 1px;
  text-underline-offset: 4px;
`;

const Wavy = styled.span`
  text-decoration: underline wavy #d23c3c 1px;
`;

const TableWrap = styled.div`
  position: relative;
  margin-bottom: 1px;
`;

const MoveHandle = styled.div`
  position: absolute;
  left: -19px;
  top: -19px;
  display: flex;
  align-items: center;
  justify-content: center;
  width: 19px;
  height: 19px;
  border: 1px solid #999;
  svg { margin: 0; }
`;

const ResizeHandle = styled.div`
  position: absolute;
  right: -12px;
  bottom: -12px;
  width: 12px;
  height: 12px;
  border: 1px solid #aaa;
`;

const DocTable = styled.table`
  width: 100%;
  table-layout: fixed;
  border-collapse: collapse;
  background: #e2f2fc;
`;

const Col = styled.col`
  width: ${p => p.$w || 'auto'};
`;

const Cell = styled.td`
  height: 101px;
  padding: 0 0 0 9px;
  border: 1px solid #000;
  vertical-align: top;
`;

const Line = styled.div`
  padding-top: 2px;
  line-height: 49px;
`;

const Selected = styled(Line)`
  background: #aebbc3;
`;

const RightMargin = styled.div`
  position: relative;
  display: flex;
  flex-direction: column;
  gap: 92px;
  padding: 107px 0 0 2px;
`;

const Connector = styled.svg`
  position: absolute;
  left: 6px;
  top: 105px;
  width: 138px;
  height: 14px;
`;

const Corners = styled.div`
  display: flex;
  justify-content: space-between;
  padding: ${p => (p.$top ? '87px 116px 0 115px' : '10px 116px 81px 115px')};
`;

const Corner = styled.div`
  width: 28px;
  height: 28px;
  border: 0 solid #aaa;
  ${p => (p.$bottom ? 'border-bottom-width: 1px;' : 'border-top-width: 1px;')}
  ${p => (p.$left ? 'border-right-width: 1px;' : 'border-left-width: 1px;')}
`;

const FooterMarks = styled.div`
  display: flex;
  flex: 1;
  justify-content: space-between;
  align-items: flex-end;
  height: 33px;
  padding-left: 1px;
  svg:nth-child(2) { margin-bottom: 15px; }
`;

const Markup = styled.aside`
  width: 381px;
  padding-top: 76px;
  border-left: 1px solid #bdbdbd;
`;

const Balloon = styled.div`
  height: 43px;
  margin-left: -1px;
  padding: 7px 0 0 11px;
  border: 1px solid #5a86a2;
  border-right: 0;
  font-family: ${DOC_FONT};
  font-size: 16px;
  line-height: 14px;
  color: #000;
`;

const BalloonTime = styled.span`
  font-size: 14px;
`;

const BalloonNote = styled.strong`
  font-size: 14px;
  line-height: 13px;
`;

const StatusBar = styled.footer`
  display: flex;
  align-items: center;
  flex: none;
  height: 33px;
  border-top: 1px solid #474747;
  background: #5a5a5a;
  color: #fff;
  overflow: hidden;
`;

const StatusText = styled.span`
  margin-right: 20px;
  padding-bottom: 2px;
  font-size: 19px;
  white-space: nowrap;
  &:first-child { margin-left: -16px; }
`;

const StatusButton = styled(PlainButton)`
  margin-right: 17px;
`;

const Spacer = styled.div`
  flex: 1;
`;

const ViewButton = styled(PlainButton)`
  align-items: center;
  justify-content: center;
  width: 45px;
  height: 33px;
  background: ${p => (p.$active ? '#404040' : 'none')};
`;

const ZoomOut = styled(PlainButton)`
  margin: 0 5px 0 6px;
`;

const Zoom = styled.input`
  flex: none;
  width: 150px;
  height: 18px;
  margin: 0 -3px 0 0;
  appearance: none;
  background:
    linear-gradient(#fff, #fff) center / 1px 8px no-repeat,
    linear-gradient(#fff, #fff) center / 100% 1px no-repeat;
  &::-webkit-slider-thumb {
    appearance: none;
    width: 6px;
    height: 17px;
    background: #fff;
  }
`;

const Taskbar = styled.div`
  display: flex;
  flex: none;
  height: 60px;
  overflow: hidden;
  background:
    linear-gradient(#14351f, #14351f) bottom / 100% 3px no-repeat,
    linear-gradient(90deg, #21353d 0%, #20343f 60%, #1b2743 100%);
  color: #fff;
`;

const Search = styled.label`
  display: flex;
  align-items: center;
  width: 408px;
  height: 60px;
  border-top: 2px solid #c4c4c4;
  border-bottom: 2px solid #a9d2a9;
  background: #f3f3f3;
  color: #333;
`;

const SearchInput = styled.input`
  flex: 1;
  min-width: 0;
  padding: 3px 0 0 16px;
  border: 0;
  outline: 0;
  background: none;
  font-size: 24px;
  line-height: 32px;
  &::placeholder {
    color: #333;
    opacity: 1;
  }
`;

const AppButton = styled.button`
  display: flex;
  align-items: center;
  justify-content: center;
  position: relative;
  width: 75px;
  height: 60px;
  padding: 0;
  border: 0;
  background: ${p => (p.$alert
    ? '#ad6c30'
    : p.$current ? 'linear-gradient(90deg, #485967 67px, #2a3d49 67px 68px, #40525f 68px)' : 'none')};
  ${p => (p.$open || p.$alert || p.$current) && css`
    &::after {
      content: '';
      position: absolute;
      bottom: 0;
      left: ${p.$open ? 7 : 0}px;
      right: ${p.$open ? 7 : 0}px;
      height: 3px;
      background: ${p.$alert ? '#dd8c1a' : '#76bcc6'};
    }
  `}
`;

const Tray = styled.div`
  display: flex;
  align-items: center;
  gap: 16px;
  margin-right: 28px;
`;

const Ime = styled.span`
  margin: 0 5px 0 -5px;
  font-size: 22px;
  font-weight: 700;
`;

const Clock = styled.div`
  padding-top: 2px;
  margin-right: -3px;
  font-size: 19px;
  line-height: 28px;
  text-align: center;
`;
